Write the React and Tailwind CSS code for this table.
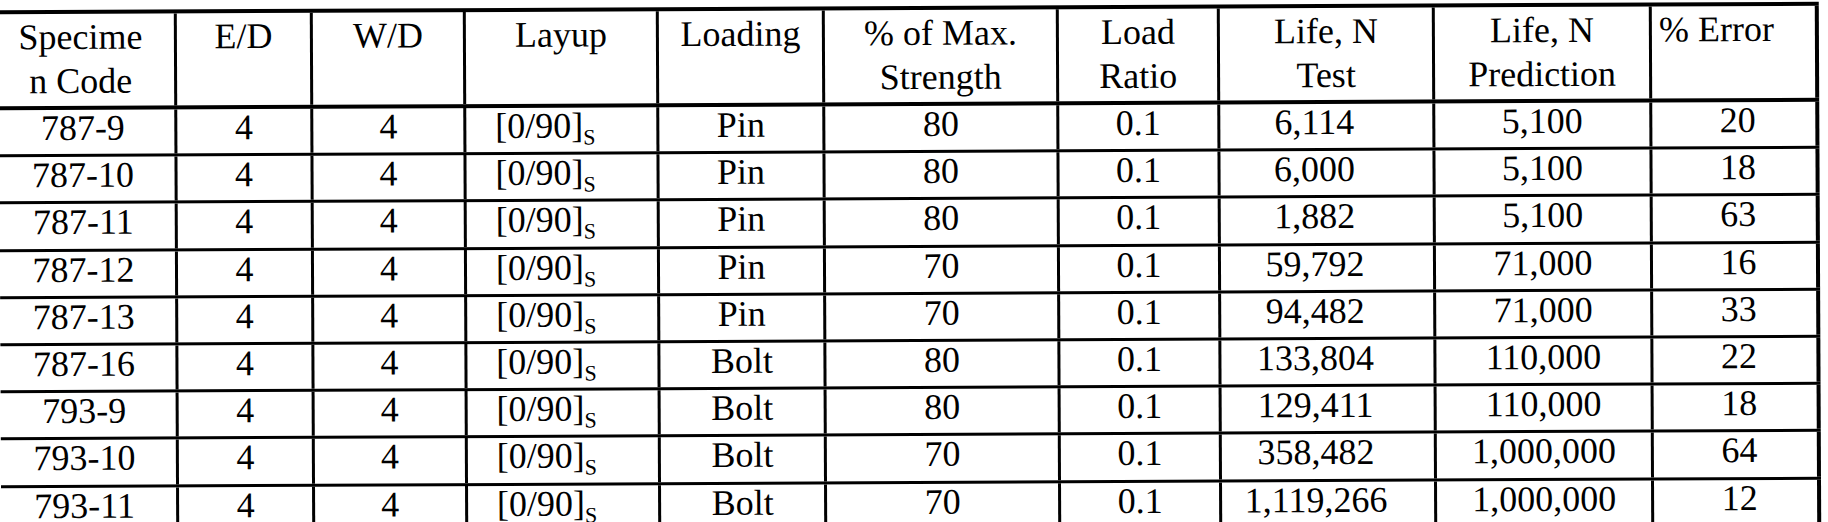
import React from "react";

const cols = "grid grid-cols-[178px_136px_153px_193px_166px_234px_161px_215px_217px_167px]";

const header = [
  ["Specime", "n Code"],
  ["E/D"],
  ["W/D"],
  ["Layup"],
  ["Loading"],
  ["% of Max.", "Strength"],
  ["Load", "Ratio"],
  ["Life, N", "Test"],
  ["Life, N", "Prediction"],
  ["% Error"],
];

const rows = [
  ["787-9", "Pin", "80", "6,114", "5,100", "20"],
  ["787-10", "Pin", "80", "6,000", "5,100", "18"],
  ["787-11", "Pin", "80", "1,882", "5,100", "63"],
  ["787-12", "Pin", "70", "59,792", "71,000", "16"],
  ["787-13", "Pin", "70", "94,482", "71,000", "33"],
  ["787-16", "Bolt", "80", "133,804", "110,000", "22"],
  ["793-9", "Bolt", "80", "129,411", "110,000", "18"],
  ["793-10", "Bolt", "70", "358,482", "1,000,000", "64"],
  ["793-11", "Bolt", "70", "1,119,266", "1,000,000", "12"],
];

function Cell({ children, last, extra = "" }) {
  return (
    <div
      className={`h-full text-center leading-[28px] pt-[4px] ${last ? "border-r-[4px]" : "border-r-[3px]"} border-black ${extra}`}
    >
      {children}
    </div>
  );
}

export default function App() {
  return (
    <div className="h-[522px] w-[1828px] overflow-hidden bg-white">
      <div
        className="w-[1820px] mt-[6px] -rotate-[0.27deg] text-black text-[36px]"
        style={{ fontFamily: '"Liberation Serif", "Times New Roman", serif' }}
      >
        <div className={`${cols} h-[100px] border-t-[4px] border-b-[4px] border-black`}>
          {header.map((h, i) => (
            <div
              key={i}
              className={`h-full text-center leading-[44px] pt-[1px] ${i === 9 ? "border-r-[4px] pr-[34px]" : "border-r-[3px]"} border-black ${i === 0 ? "pr-[12px]" : ""}`}
            >
              {h.map((line, j) => (
                <div key={j}>{line}</div>
              ))}
            </div>
          ))}
        </div>
        {rows.map((r, i) => (
          <div key={i} className={`${cols} h-[47.2px] border-b-[3px] border-black`}>
            <Cell extra="pr-[8px]">{r[0]}</Cell>
            <Cell>4</Cell>
            <Cell>4</Cell>
            <Cell extra="pr-[32px]">
              [0/90]<span className="relative top-[7px] text-[22px]">S</span>
            </Cell>
            <Cell>{r[1]}</Cell>
            <Cell>{r[2]}</Cell>
            <Cell>0.1</Cell>
            <Cell extra="pr-[24px]">{r[3]}</Cell>
            <Cell>{r[4]}</Cell>
            <Cell last extra="pl-[8px]">{r[5]}</Cell>
          </div>
        ))}
      </div>
    </div>
  );
}
